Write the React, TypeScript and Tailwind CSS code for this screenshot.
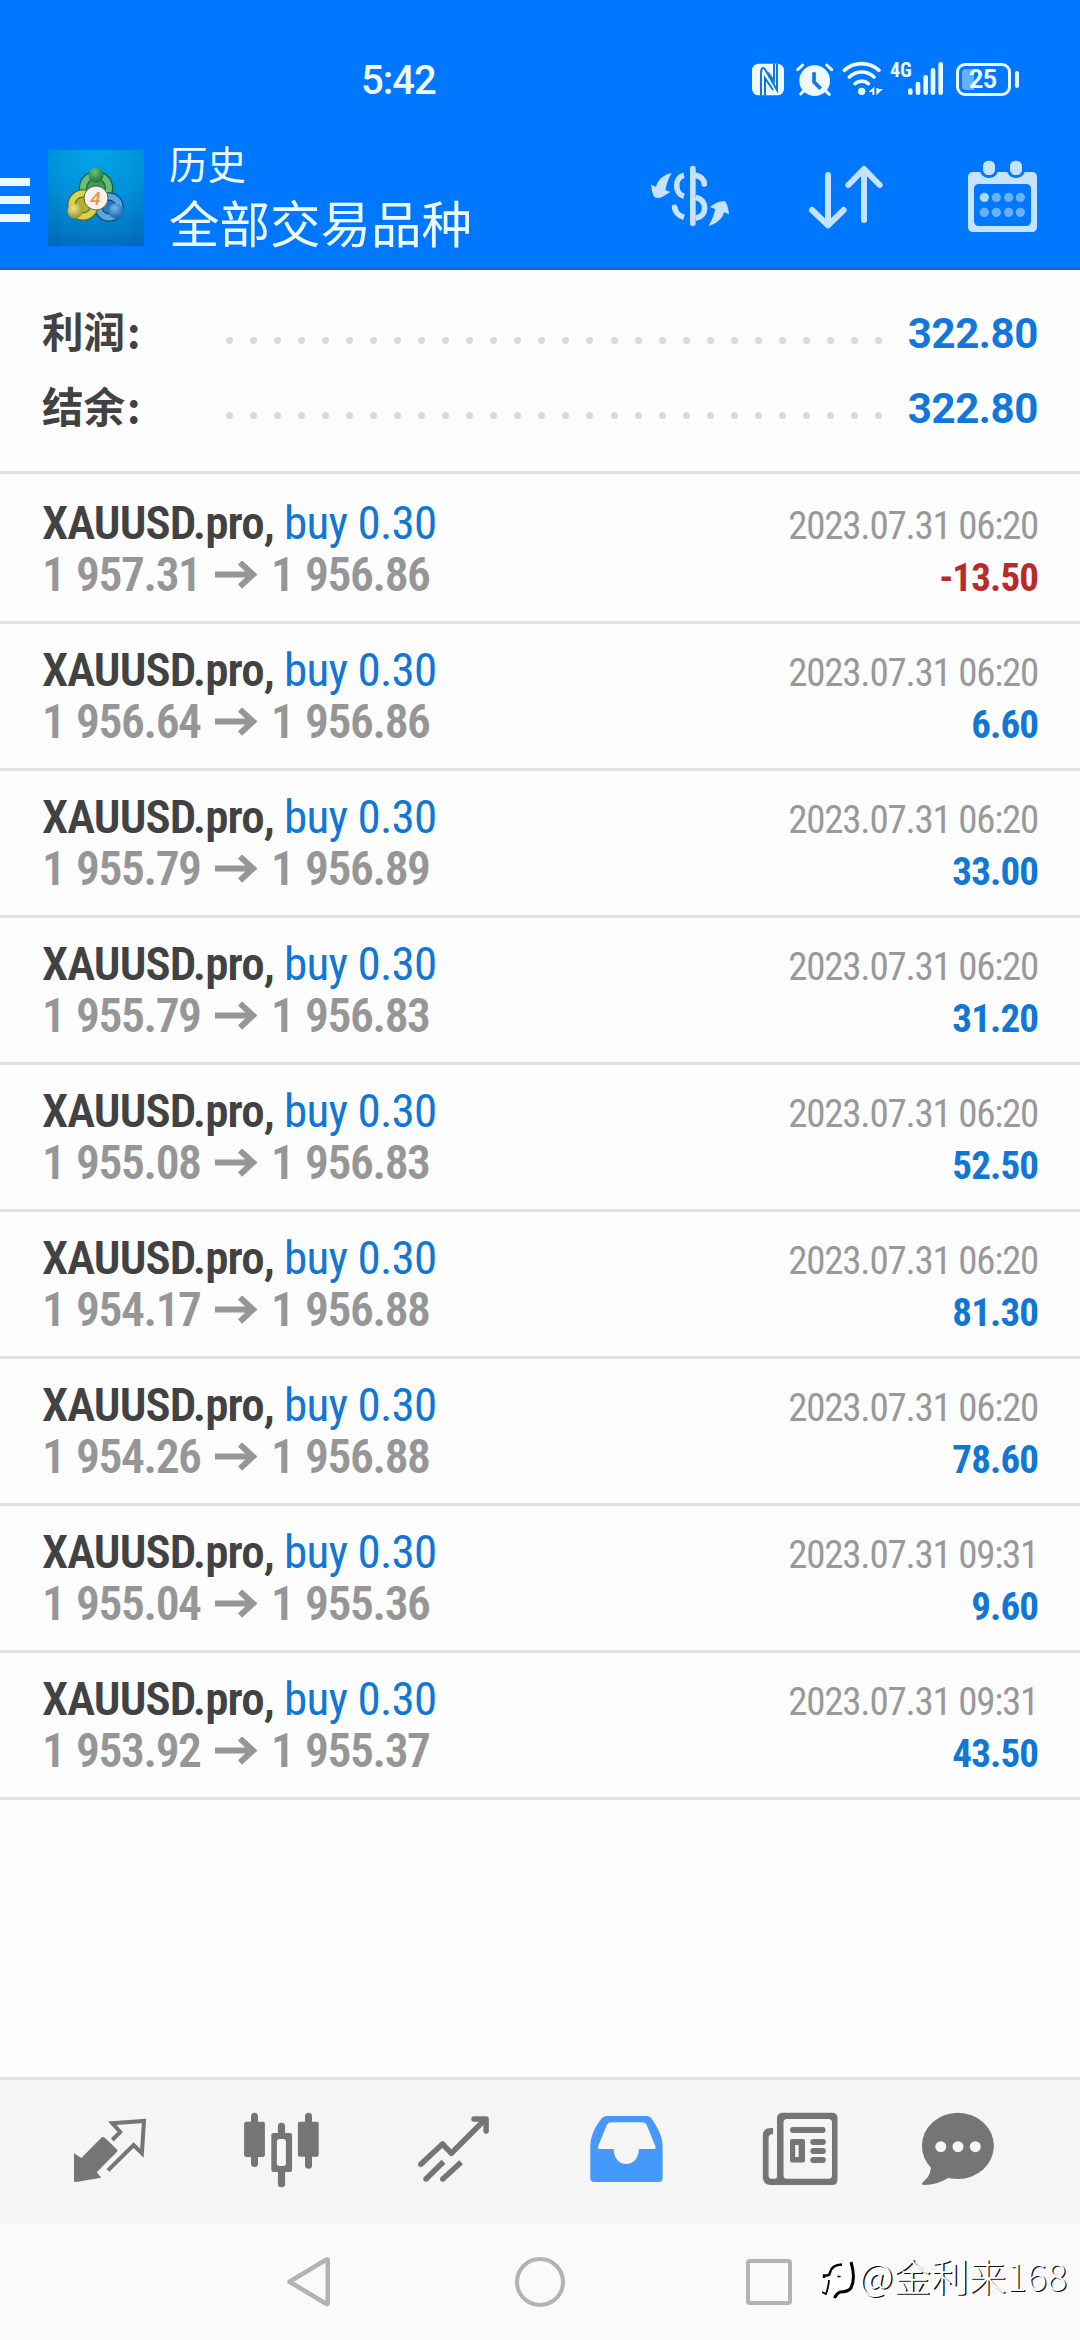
import type { ReactNode } from "react"

interface Deal {
  open: string
  close: string
  time: string
  profit: string
}

const deals: Deal[] = [
  { open: "1 957.31", close: "1 956.86", time: "2023.07.31 06:20", profit: "-13.50" },
  { open: "1 956.64", close: "1 956.86", time: "2023.07.31 06:20", profit: "6.60" },
  { open: "1 955.79", close: "1 956.89", time: "2023.07.31 06:20", profit: "33.00" },
  { open: "1 955.79", close: "1 956.83", time: "2023.07.31 06:20", profit: "31.20" },
  { open: "1 955.08", close: "1 956.83", time: "2023.07.31 06:20", profit: "52.50" },
  { open: "1 954.17", close: "1 956.88", time: "2023.07.31 06:20", profit: "81.30" },
  { open: "1 954.26", close: "1 956.88", time: "2023.07.31 06:20", profit: "78.60" },
  { open: "1 955.04", close: "1 955.36", time: "2023.07.31 09:31", profit: "9.60" },
  { open: "1 953.92", close: "1 955.37", time: "2023.07.31 09:31", profit: "43.50" },
]

const DOTS = Array.from({ length: 28 })

function StatusBar() {
  return (
    <div className="flex h-[140px] items-start pl-[361px]">
      <span className="mt-[57px] w-[391px] font-['Roboto'] text-[40px] leading-[48px] font-medium tracking-[-1px] text-[#f0fbff]">
        5:42
      </span>
      {/* nfc, alarm, wifi */}
      <svg className="mt-[60px] h-[40px] w-[132px]" viewBox="0 0 396 120" fill="#ecfaff">
        <rect x="0" y="11" width="96" height="95" rx="20" />
        <g fill="none" stroke="#1278d4" strokeWidth="6">
          <path d="M27 107V40c0-16 6-20 12-12l36 62V11" />
          <path d="M39 107V54l24 36" />
          <path d="M66 11v52L48 38" />
        </g>
        <circle cx="188" cy="62" r="46" />
        <g stroke="#ecfaff" strokeWidth="9" strokeLinecap="round" fill="none">
          <path d="M137 29l15-14M239 29l-15-14M156 92l-10 10M220 92l12 11" />
        </g>
        <path d="M186 37v29l20 20" fill="none" stroke="#1278d4" strokeWidth="11" />
        <g fill="none" stroke="#ecfaff" strokeWidth="11" strokeLinecap="round">
          <path d="M277 31C306 4 351 4 381 31" />
          <path d="M292 51C314 31 344 31 366 51" />
          <path d="M309 71C321 61 338 61 349 71" />
        </g>
        <circle cx="329" cy="94" r="11" />
        <path d="M367 80v25h-6v-9h-11zM373 106V84h6v3h14z" />
      </svg>
      <span className="mt-[59px] ml-[6px] w-[18px] font-['Roboto_Condensed'] text-[20px] leading-[22px] font-bold text-[#f0fbff]">
        4G
      </span>
      <svg className="mt-[60px] h-[40px] w-[36px]" viewBox="0 0 108 120" stroke="#ecfaff" strokeWidth="14" strokeLinecap="round">
        <path d="M7 92v6M30 72v26M53 52v46M75 31v67M98 13v85" />
      </svg>
      {/* battery */}
      <div className="mt-[63px] ml-[12px] flex h-[33px] w-[55px] items-center rounded-[9px] border-[3px] border-[#ecfaff] pl-[3px]">
        <div className="flex h-[21px] w-[12px] items-center rounded-l-[4px] bg-[#62b0ff]">
          <span className="ml-[7px] font-['Roboto'] text-[25px] leading-[24px] font-bold tracking-[-0.5px] text-[#f0fbff]">25</span>
        </div>
      </div>
      <div className="mt-[71px] ml-[4px] h-[17px] w-[4px] rounded-full bg-[#ecfaff]" />
    </div>
  )
}

function AppLogo() {
  return (
    <svg className="h-[96px] w-[96px]" viewBox="0 0 96 96">
      <defs>
        <radialGradient id="bg" cx="0.5" cy="0" r="1.1">
          <stop offset="0" stopColor="#00a6ea" />
          <stop offset="0.5" stopColor="#0090d9" />
          <stop offset="1" stopColor="#0068b8" />
        </radialGradient>
        <radialGradient id="green" cx="0.4" cy="0.3" r="0.8">
          <stop offset="0" stopColor="#6cc07a" />
          <stop offset="1" stopColor="#0f6a2c" />
        </radialGradient>
        <radialGradient id="yellow" cx="0.4" cy="0.3" r="0.8">
          <stop offset="0" stopColor="#ece98a" />
          <stop offset="1" stopColor="#8f8a1a" />
        </radialGradient>
        <radialGradient id="blue" cx="0.4" cy="0.3" r="0.8">
          <stop offset="0" stopColor="#6fb9ee" />
          <stop offset="1" stopColor="#0d5ba6" />
        </radialGradient>
      </defs>
      <rect width="96" height="96" fill="url(#bg)" />
      <path d="M16 0v96M80 0v96M0 16h96M0 80h96" stroke="#2fa8e6" strokeWidth="0.6" opacity="0.25" />
      <circle cx="48" cy="38" r="13" fill="#3f9a52" stroke="#1b5e3a" strokeWidth="8.5" />
      <circle cx="48" cy="38" r="13" fill="none" stroke="#6dbb78" strokeWidth="6" />
      <circle cx="61" cy="57" r="10.500" fill="#2a78c2" stroke="#0f4a84" strokeWidth="8.5" />
      <circle cx="61" cy="57" r="10.500" fill="none" stroke="#5aa7e0" strokeWidth="6" />
      <circle cx="35" cy="55" r="11.500" fill="#b5ae36" stroke="#5d6a26" strokeWidth="8.5" />
      <circle cx="35" cy="55" r="11.500" fill="none" stroke="#d8d24e" strokeWidth="6" />
      <circle cx="48" cy="25" r="7.5" fill="url(#green)" />
      <circle cx="27" cy="61" r="7.5" fill="url(#yellow)" />
      <circle cx="68" cy="61" r="7.5" fill="url(#blue)" />
      <circle cx="48" cy="48" r="12" fill="#f4f1ee" stroke="#556b3c" strokeWidth="1" />
      <text x="47.500" y="54.5" textAnchor="middle" fontFamily="Roboto" fontWeight="500" fontStyle="italic" fontSize="19" fill="#ee9440">
        4
      </text>
    </svg>
  )
}

function Header() {
  return (
    <div className="flex h-[130px] items-start">
      <div className="mt-[38px] flex w-[30px] flex-col gap-[10px]">
        <div className="h-[8px] bg-[#e9f7ff]" />
        <div className="h-[8px] bg-[#e9f7ff]" />
        <div className="h-[8px] bg-[#e9f7ff]" />
      </div>
      <div className="mt-[10px] ml-[18px]">
        <AppLogo />
      </div>
      <div className="ml-[25px] w-[481px] font-['Noto_Sans_CJK_SC'] text-[#ecfaff]">
        <p className="mt-[-2px] text-[38.5px] leading-[48px]">历史</p>
        <p className="mt-[7px] text-[50.5px] leading-[56px]">全部交易品种</p>
      </div>
      <svg className="mt-[20px] h-[70px] w-[80px]" viewBox="0 0 240 210" fill="none" stroke="#c5e3ff" strokeWidth="17">
        <path d="M128.5 26v164" strokeLinecap="round" />
        <path d="M102 46c-14 3-22 15-22 31s9 28 22 32" />
        <path d="M137 46c17 4 25 13 26 26" strokeLinecap="round" />
        <path d="M137 112c18 5 27 17 27 32s-10 27-27 31" />
        <path d="M74 142c2 15 12 25 28 30" />
        <path d="M74 142l1 4" strokeLinecap="round" />
        <g fill="#c5e3ff" stroke="none">
          <path d="M65 39C42 43 22 60 18 80L3 74c1 12 4 24 8 34 5 7 14 7 24 4l26-16-15-6c4-18 9-36 19-51z" />
          <path d="M175 198c8-12 18-32 20-51l-15-6c14-11 30-18 44-18 8 8 12 24 13 40l-15-6c-4 20-24 35-47 41z" />
        </g>
      </svg>
      <svg className="mt-[20px] ml-[76px] h-[76px] w-[80px]" viewBox="0 0 240 228" fill="none" stroke="#c5e3ff" strokeWidth="18" strokeLinecap="round" strokeLinejoin="round">
        <path d="M66 45v150M18 150l48 46 47-46" />
        <path d="M174 180V30M127 75l47-48 47 48" />
      </svg>
      <svg className="mt-[20px] ml-[82px] h-[76px] w-[72px]" viewBox="0 0 216 228">
        <path
          fill="#c5e3ff"
          fillRule="evenodd"
          d="M14 36H193a14 14 0 0 1 14 14V202a14 14 0 0 1-14 14H14a14 14 0 0 1-14-14V50a14 14 0 0 1 14-14zM32 72a14 14 0 0 0-14 14V184a14 14 0 0 0 14 14H175a14 14 0 0 0 14-14V86a14 14 0 0 0-14-14z"
        />
        <g fill="#c5e3ff" stroke="#0077ff" strokeWidth="9">
          <rect x="40.5" y="-2.5" width="45" height="52" rx="20" />
          <rect x="121.5" y="-2.5" width="45" height="52" rx="20" />
        </g>
        <g fill="#66b2ff">
          <circle cx="49" cy="112" r="14" fill="#a6dcff" />
          <circle cx="85" cy="112" r="14" />
          <circle cx="122" cy="112" r="14" />
          <circle cx="157" cy="112" r="14" />
          <circle cx="49" cy="157" r="14" />
          <circle cx="85" cy="157" r="14" />
          <circle cx="122" cy="157" r="14" />
          <circle cx="157" cy="157" r="14" />
        </g>
      </svg>
    </div>
  )
}

function SummaryRow({ label, value }: { label: string; value: string }) {
  return (
    <div className="flex h-[75px] items-center pr-[42px] pl-[42px]">
      <span className="flex w-[184px] pb-[3px] font-['Noto_Sans_CJK_SC'] text-[41.5px] leading-[60px] font-bold text-[#424242]">
        {label}
        <span className="ml-[2px]">:</span>
      </span>
      <div className="mt-[18px] flex w-[656px] justify-between">
        {DOTS.map((_, i) => (
          <span key={i} className="h-[7px] w-[7px] rounded-full bg-[#dadada]" />
        ))}
      </div>
      <span className="ml-auto pt-[4px] font-['Roboto'] text-[42px] leading-[50px] font-bold tracking-[-0.4px] text-[#1177de]">
        {value}
      </span>
    </div>
  )
}

function DealRow({ deal }: { deal: Deal }) {
  const negative = deal.profit.startsWith("-")
  return (
    <div className="h-[147px] border-b-[3px] border-[#e1e1e1] pt-[20px] pr-[42px] pl-[42px] font-['Roboto_Condensed']">
      <div className="flex h-[52px] items-baseline justify-between leading-[52px]">
        <p className="text-[47px] tracking-[-0.7px] whitespace-pre text-[#1177d4]">
          <span className="font-semibold tracking-[-0.9px] text-[#424242]">XAUUSD.pro,</span> buy 0.30
        </p>
        <p className="text-[39px] tracking-[-1.25px] text-[#999999]">{deal.time}</p>
      </div>
      <div className="flex h-[52px] items-baseline justify-between leading-[52px]">
        <p className="flex items-baseline text-[47.5px] font-semibold tracking-[-1.4px] text-[#969696] [word-spacing:2px]">
          <span className="w-[173px]">{deal.open}</span>
          <svg className="h-[30px] w-[42px]" viewBox="0 0 42 30" fill="none" stroke="#969696" strokeWidth="6">
            <path d="M0 13.500h38M25 1.500l13 12-13 12" />
          </svg>
          <span className="ml-[14px]">{deal.close}</span>
        </p>
        <p
          className={
            negative
              ? "text-[39px] font-bold tracking-[-0.9px] text-[#b92b2b]"
              : "text-[39px] font-bold tracking-[-0.9px] text-[#1177d4]"
          }
        >
          {deal.profit}
        </p>
      </div>
    </div>
  )
}

function TabIcon({ children, last = false }: { children: ReactNode; last?: boolean }) {
  return (
    <div className={last ? "flex w-[148px] justify-center" : "flex w-[172px] justify-center"}>
      <svg className="h-[80px] w-[80px]" viewBox="0 0 80 80" fill="#757575">
        {children}
      </svg>
    </div>
  )
}

function TabBar() {
  return (
    <div className="flex h-[146px] border-t-[3px] border-[#e3e3e3] bg-[#f5f5f5] pt-[30px] pl-[24px]">
      <TabIcon>
        <path d="M4 43.300l7.300 4.700L31.500 27.500q1.500-1 3 0L47 39.500q.8 1.200 0 2.200L26.800 62.300l4.400 5.400L6 72q-2 0-2-1.500z" />
        <path d="M42.300 30l7.900-8-7.900-8.700L74 11l-2.100 32.300L63.600 35 38 60.300" fill="none" stroke="#757575" strokeWidth="4" />
      </TabIcon>
      <TabIcon>
        <rect x="2.100" y="11.700" width="20.800" height="35.300" rx="2" />
        <rect x="9" y="2.700" width="7" height="54.300" rx="3.500" />
        <rect x="55.900" y="11.700" width="20.800" height="35" rx="2" />
        <rect x="63" y="2.700" width="7" height="56" rx="3.500" />
        <rect x="35.900" y="12.700" width="7.200" height="64.500" rx="3.500" />
        <rect x="29.300" y="23" width="20.800" height="39" rx="2" />
        <rect x="34.900" y="29" width="9" height="27" rx="2.500" fill="#f7f7f7" />
      </TabIcon>
      <TabIcon>
        <g fill="none" stroke="#757575" strokeWidth="5.500">
          <path d="M6.800 54.300L28.500 34l8.900 9.300L70 10.500" strokeLinejoin="round" />
          <path d="M60 8.900h12.100V21" strokeLinecap="round" strokeLinejoin="round" />
          <path d="M12 69l17.500-17.300M28.800 69l18.300-16.700" />
          <path d="M6.800 54.300h.01M12 69h.01M28.800 69h.01" strokeLinecap="round" />
        </g>
      </TabIcon>
      <TabIcon>
        <path
          fill="#4499fb"
          fillRule="evenodd"
          d="M20 6H61.500q2.500 0 4 2.500C72 18 76.600 26 76.600 37V68q0 4-4 4H8.300q-4 0-4-4V37C4.300 26 9 17 15.500 8.500Q17.500 6 20 6zM25.500 12.300Q22.500 12.300 21 14.500L12 36.500q-.8 2.500 1.500 2.500H27.700C27.700 48 33 54 40.200 54s12.600-6 12.600-15H68q2.300 0 1.500-2.500L60.500 14.500q-1.500-2.200-4-2.200z"
        />
      </TabIcon>
      <TabIcon>
        <path
          fillRule="evenodd"
          d="M25 2.700H74q5.500 0 5.500 5.500V69.500q0 5.500-5.500 5.500H13q-8.200 0-8.200-8.200V26q0-8 8-8h2.300v6q-4.500 0-4.500 4V65.500q0 3.200 3 3.200H17q2 0 2-2V8.200q0-5.500 6-5.500zM29 9q-3.500 0-3.500 3.500V65.200q0 3.500 3.500 3.500H70.500q3.500 0 3.500-3.500V12.500Q74 9 70.500 9z"
        />
        <rect x="32" y="17" width="35.500" height="6" rx="3" />
        <path fillRule="evenodd" d="M34 29H45q2 0 2 2V50.500q0 2-2 2H34q-2 0-2-2V31q0-2 2-2zM37.200 35V47h3.400V35z" />
        <rect x="52.300" y="29" width="15.500" height="6" rx="3" />
        <rect x="52.300" y="38" width="15.500" height="6" rx="3" />
        <rect x="52.300" y="47" width="15.500" height="6" rx="3" />
      </TabIcon>
      <TabIcon last>
        <ellipse cx="39.900" cy="35.800" rx="36" ry="33.100" />
        <path d="M12.800 56.500C13 63 10 68 5.500 71.500 3.500 73.500 4 75 6 75c9 0 18-3 25-7.500L28 56z" />
        <g fill="#f7f7f7">
          <circle cx="22.800" cy="36.700" r="5.500" />
          <circle cx="40" cy="36.700" r="5.500" />
          <circle cx="57.300" cy="36.700" r="5.500" />
        </g>
      </TabIcon>
    </div>
  )
}

function SystemNav() {
  return (
    <div className="relative flex h-[117px] items-start bg-[#fafafa] pt-[32px] pl-[285px]">
      <svg className="h-[54px] w-[48px]" viewBox="0 0 48 54" fill="none" stroke="#b3b3b3" strokeWidth="4.500" strokeLinejoin="round">
        <path d="M4.500 26.700L41.500 4.500Q42.800 4 42.800 5.500V48Q42.800 49.500 41.500 49z" />
      </svg>
      <div className="mt-[2px] ml-[182px] h-[50px] w-[50px] rounded-full border-[4.500px] border-[#b3b3b3]" />
      <div className="mt-[4px] ml-[181px] h-[46px] w-[46px] rounded-[4px] border-[4px] border-[#b3b3b3]" />
      {/* author stamp over the bar */}
      <div className="absolute top-[22px] left-[822px] flex items-center">
        <svg className="mt-[11px] h-[48px] w-[36px]" viewBox="0 0 36 48">
          <path d="M12 18q1-8 10-9 10-1 12 8c1 14-1 20-10 22-5 1-6 5-8 6l-3-8-8-2 3-13z" fill="#ffffff" />
          <g fill="none" stroke="#000000">
            <path d="M2 22V19.500h3q2.500 0 3-3Q9.500 9 20 8.500" strokeWidth="2.400" />
            <path d="M7 24q-.5 7-3 14l-4-2" strokeWidth="1.800" />
            <path d="M29 6c3 10 3 20 0 26q-3 4-11 4-4 2-5.500 6" strokeWidth="3" />
            <path d="M15.500 20.500h3" strokeWidth="1.600" />
          </g>
        </svg>
        <span className="ml-[1px] font-['Noto_Sans_CJK_SC'] text-[37.500px] leading-[50px] tracking-[0.2px] font-light whitespace-nowrap text-white [text-shadow:1.4px_1.2px_0px_#111111]">
          @金利来168
        </span>
      </div>
    </div>
  )
}

export default function App() {
  return (
    <div className="flex h-[2340px] w-[1080px] flex-col overflow-hidden bg-[#fdfdfd]">
      <div className="h-[270px] border-b-[2px] border-[#1668c4] bg-[#0077ff]">
        <StatusBar />
        <Header />
      </div>
      <div className="h-[207px]">
        <div className="h-[204px] border-b-[3px] border-[#e1e1e1] pt-[24px]">
          <SummaryRow label="利润" value="322.80" />
          <SummaryRow label="结余" value="322.80" />
        </div>
      </div>
      <div className="flex-1">
        {deals.map((deal, i) => (
          <DealRow key={i} deal={deal} />
        ))}
      </div>
      <TabBar />
      <SystemNav />
    </div>
  )
}
